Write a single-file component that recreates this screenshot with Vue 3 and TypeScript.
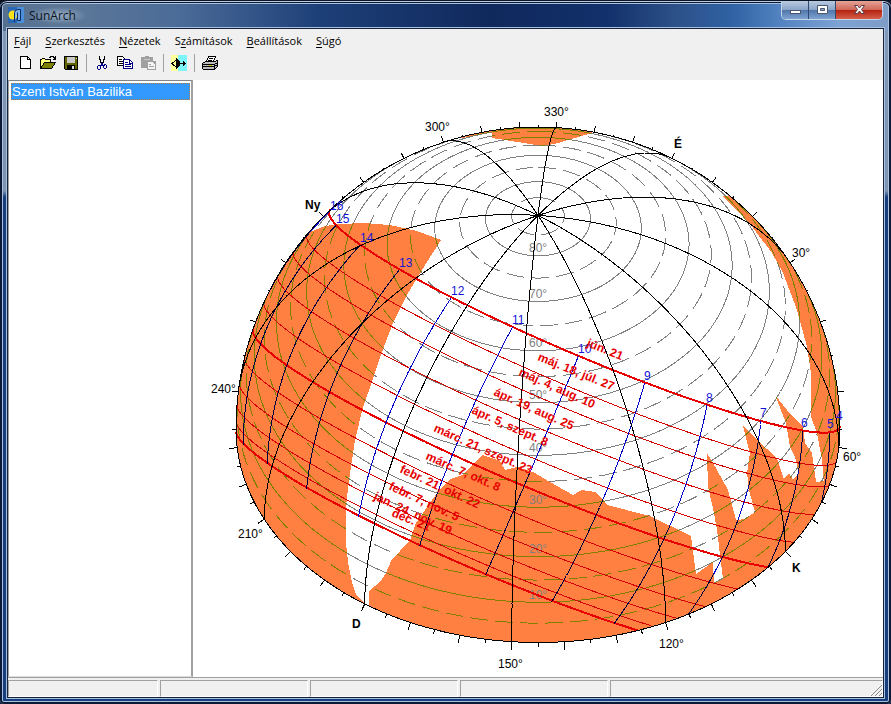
<script setup lang="ts">
type Pt = [number, number]
interface Label { text: string; x: number; y: number; bold?: boolean }
interface DateLabel { text: string; x: number; y: number; angle: number }

const menus = [
  { key: 'F', before: '', after: 'ájl' },
  { key: 'S', before: '', after: 'zerkesztés' },
  { key: 'N', before: '', after: 'ézetek' },
  { key: 'z', before: 'S', after: 'ámítások' },
  { key: 'B', before: '', after: 'eállítások' },
  { key: 'S', before: '', after: 'úgó' },
]

// Orthographic view of the sky dome, camera at azimuth 145°, 45° above the horizon.
const cx = 538
const cy = 429
const R = 302
const rad = Math.PI / 180
const cameraAz = 145 * rad
const latitude = 47.5 * rad
const tilt = Math.SQRT1_2

function project(n: number, e: number, u: number): Pt | null {
  const front = n * Math.cos(cameraAz) + e * Math.sin(cameraAz)
  const right = n * Math.sin(cameraAz) - e * Math.cos(cameraAz)
  if (u < -0.001 || front + u < -0.001) return null
  return [cx + R * right, cy + R * tilt * (front - u)]
}

function horizontal(az: number, alt: number): Pt | null {
  const c = Math.cos(alt * rad)
  return project(c * Math.cos(az * rad), c * Math.sin(az * rad), Math.sin(alt * rad))
}

function sun(hour: number, dec: number): Pt | null {
  const h = (hour - 11.73) * 15 * rad
  const d = dec * rad
  const u = Math.sin(latitude) * Math.sin(d) + Math.cos(latitude) * Math.cos(d) * Math.cos(h)
  const n = Math.cos(latitude) * Math.sin(d) - Math.sin(latitude) * Math.cos(d) * Math.cos(h)
  return project(n, -Math.cos(d) * Math.sin(h), u)
}

function trace(from: number, to: number, step: number, f: (t: number) => Pt | null): string {
  let path = ''
  let open = false
  const count = Math.round((to - from) / step)
  for (let i = 0; i <= count; i++) {
    const p = f(from + i * step)
    if (p) path += `${open ? 'L' : 'M'}${p[0].toFixed(1)} ${p[1].toFixed(1)}`
    open = p !== null
  }
  return path
}

const altitudes = Array.from({ length: 17 }, (_, i) => (i + 1) * 5).map((alt) => ({
  dashed: alt % 10 === 5,
  d: trace(-35, 325, 1, (az) => horizontal(az, alt)),
}))

const meridians = Array.from({ length: 12 }, (_, i) => trace(0, 90, 0.5, (alt) => horizontal(i * 30, alt)))

const sunPaths = [
  { dec: 23.44, thick: true },
  { dec: 17.2, thick: false },
  { dec: 13.1, thick: false },
  { dec: 7.7, thick: false },
  { dec: 2, thick: false },
  { dec: -3.6, thick: true },
  { dec: -9.1, thick: false },
  { dec: -14.2, thick: false },
  { dec: -18.2, thick: false },
  { dec: -21.3, thick: false },
  { dec: -23.2, thick: true },
].map(({ dec, thick }) => ({ thick, d: trace(2, 22, 0.05, (h) => sun(h, dec)) }))

const hourLines = Array.from({ length: 17 }, (_, i) => trace(-23.44, 23.44, 0.2, (dec) => sun(i + 4, dec)))

const ticks = Array.from({ length: 72 }, (_, i) => {
  const theta = cameraAz - i * 5 * rad
  const c = Math.cos(theta)
  const behind = c < 0
  const alt = behind ? Math.atan(-c) : 0
  const x = R * Math.cos(alt) * Math.sin(theta)
  const y = R * tilt * (Math.cos(alt) * c - Math.sin(alt))
  const nx = x
  const ny = behind ? y : y * 2
  const length = (i % 2 ? 4 : 8) - (behind ? 2 : 0)
  const size = length / Math.hypot(nx, ny)
  return `M${(cx + x).toFixed(1)} ${(cy + y).toFixed(1)}l${(nx * size).toFixed(1)} ${(ny * size).toFixed(1)}`
}).join('')

const outline = `M${cx - R} ${cy}A${R} ${R} 0 0 1 ${cx + R} ${cy}A${R} ${R * tilt} 0 0 1 ${cx - R} ${cy}Z`

// Surrounding buildings and terrain that cover the sky.
const obstacles = [
  'M310 232L325 226L340 224L363 223L390 225L417 231L441 240L427 262L408 293L393 323L382 352L372 382L363 407L355 440L349 480L346 507L346 543L348 562L352 582L356 595L365 603L340 620L200 560L200 300Z',
  'M369 606V591L380 582L386 573L391 561L410 540L416 523L437 493L450 479L462 475L477 460L483 455L500 461L505 470L517 467L533 472L550 482L573 495L582 490L595 492L602 498L607 505L650 516L691 536L696 574L713 562L714 583L723 579L717 530L713 508L708 487L707 453L717 470L728 490L736 520L745 519L755 512L749 490L747 473L750 453L747 442L743 426L757 440L777 458L784 479L789 473L793 480L799 473L795 457L790 447L786 423L775 395L787 410L803 427L805 443L812 453L816 482L824 481L822 460L817 433L811 417V373L807 347L797 310L783 273L772 253L753 228L737 210L722 196L735 196L900 250V660H369Z',
  'M462 138L492 132V138L543 146L558 143L592 133L592 120H462Z',
].join('')

const rimLabels: Label[] = [
  { text: '300°', x: 425, y: 131 },
  { text: '330°', x: 544, y: 116 },
  { text: 'É', x: 674, y: 148, bold: true },
  { text: '30°', x: 792, y: 257 },
  { text: '60°', x: 843, y: 461 },
  { text: 'K', x: 792, y: 572, bold: true },
  { text: '120°', x: 659, y: 648 },
  { text: '150°', x: 498, y: 668 },
  { text: 'D', x: 352, y: 628, bold: true },
  { text: '210°', x: 238, y: 538 },
  { text: '240°', x: 211, y: 393 },
  { text: 'Ny', x: 305, y: 209, bold: true },
]

const altLabels: Label[] = [
  { text: '80°', x: 529, y: 252 },
  { text: '70°', x: 529, y: 298 },
  { text: '60°', x: 529, y: 347 },
  { text: '50°', x: 529, y: 399 },
  { text: '40°', x: 529, y: 452 },
  { text: '30°', x: 529, y: 504 },
  { text: '20°', x: 529, y: 553 },
  { text: '10°', x: 529, y: 599 },
]

const hourLabels: Label[] = [
  { text: '16', x: 330, y: 210 },
  { text: '15', x: 336, y: 223 },
  { text: '14', x: 360, y: 242 },
  { text: '13', x: 399, y: 267 },
  { text: '12', x: 451, y: 295 },
  { text: '11', x: 512, y: 324 },
  { text: '10', x: 578, y: 353 },
  { text: '9', x: 644, y: 380 },
  { text: '8', x: 706, y: 402 },
  { text: '7', x: 760, y: 417 },
  { text: '6', x: 801, y: 427 },
  { text: '5', x: 827, y: 428 },
  { text: '4', x: 836, y: 420 },
]

const dateLabels: DateLabel[] = [
  { text: 'jún. 21', x: 586, y: 346, angle: 22 },
  { text: 'máj. 18, júl. 27', x: 537, y: 360, angle: 22 },
  { text: 'máj. 4, aug. 10', x: 518, y: 375, angle: 24 },
  { text: 'ápr. 19, aug. 25', x: 493, y: 395, angle: 24 },
  { text: 'ápr. 5, szept. 8', x: 471, y: 413, angle: 24 },
  { text: 'márc. 21, szept. 23', x: 433, y: 431, angle: 24 },
  { text: 'márc. 7, okt. 8', x: 425, y: 459, angle: 24 },
  { text: 'febr. 21, okt. 22', x: 399, y: 472, angle: 25 },
  { text: 'febr. 7, nov. 5', x: 388, y: 489, angle: 25 },
  { text: 'jan. 24, nov. 19', x: 373, y: 499, angle: 25 },
  { text: 'déc. 21', x: 391, y: 516, angle: 22 },
]
</script>

<template>
  <div class="window">
    <header class="titlebar">
      <svg class="app-icon" width="16" height="16" viewBox="0 0 16 16">
        <rect width="16" height="16" fill="#2a67b5" />
        <rect x="9" width="7" height="16" fill="#4a8fd8" />
        <circle cx="5" cy="8" r="4.500" fill="#ffe11a" />
        <path d="M6.500 15V5.500Q7 2.500 10 2.500h2.500v11h-3V5.500" fill="#7db4ea" stroke="#0b2a66" />
      </svg>
      <span class="title">SunArch</span>
      <div class="caption">
        <button class="cap" aria-label="Minimize">
          <svg width="13" height="12" viewBox="0 0 13 12"><rect x="1.500" y="6.500" width="10" height="3" fill="#fff" stroke="#4a566c" /></svg>
        </button>
        <button class="cap" aria-label="Maximize">
          <svg width="13" height="12" viewBox="0 0 13 12"><path d="M1.500 1.500h10v8h-10zM4.500 4.500v2h4v-2z" fill="#fff" fill-rule="evenodd" stroke="#4a566c" /></svg>
        </button>
        <button class="cap close" aria-label="Close">
          <svg width="13" height="12" viewBox="0 0 13 12"><path d="M1.500 1.500h3L6.500 4l2-2.500h3L8.500 5.500l3 4h-3L6.500 7l-2 2.500h-3l3-4z" fill="#fff" stroke="#5a3a44" /></svg>
        </button>
      </div>
    </header>

    <div class="client">
      <nav class="menubar">
        <button v-for="m in menus" :key="m.before + m.key + m.after">{{ m.before }}<u>{{ m.key }}</u>{{ m.after }}</button>
      </nav>

      <div class="toolbar">
        <button aria-label="New">
          <svg width="16" height="16" viewBox="0 0 16 16" shape-rendering="crispEdges"><path d="M3.500 1.500h7l3 3v9h-10z" fill="#fff" stroke="#000" /><path d="M10.500 1.500v3h3" fill="none" stroke="#000" /></svg>
        </button>
        <button aria-label="Open">
          <svg width="16" height="16" viewBox="0 0 16 16" shape-rendering="crispEdges"><path d="M.5 13.500v-9h1l1-1h2l1 1h5v3H5z" fill="#ffff80" stroke="#000" /><path d="M.5 13.500l4-6h11l-4 6z" fill="#808000" stroke="#000" /><path d="M9 2.500h1v-1h3v1h1v1h1M15.500 1v4M13 4.500h3" fill="none" stroke="#000" /></svg>
        </button>
        <button aria-label="Save">
          <svg width="16" height="16" viewBox="0 0 16 16" shape-rendering="crispEdges"><path d="M1.500 1.500h13v13h-12l-1-1z" fill="#666600" stroke="#000" /><path d="M4 2h8v6H4z" fill="#c8c8c8" /><path d="M4 10h8v4H4z" fill="#000" /><path d="M9 11h2v3H9z" fill="#ddd" /><path d="M13 3h1v1h-1z" fill="#ddd" /></svg>
        </button>
        <i class="sep"></i>
        <button aria-label="Cut">
          <svg width="16" height="16" viewBox="0 0 16 16" shape-rendering="crispEdges"><path d="M5.500 1v3l1 1v2l1 1v1M10.500 1v3l-1 1v2l-1 1v1" fill="none" stroke="#000" /><path d="M7.500 8v2l-1 1M8.500 8v2h2M4.500 10.500h1l1 1v2l-1 1h-1l-1-1v-2zM10.500 9.500h1l1 1v2l-1 1h-1l-1-1v-2z" fill="none" stroke="#000080" /></svg>
        </button>
        <button aria-label="Copy">
          <svg width="16" height="16" viewBox="0 0 16 16" shape-rendering="crispEdges"><path d="M.5 1.500h5l3 3v6h-8z" fill="#fff" stroke="#000" /><path d="M2 4.500h3M2 6.500h4M2 8.500h4" stroke="#000" /><path d="M6.500 4.500h6l3 3v6h-9z" fill="#fff" stroke="#000080" /><path d="M8 7.500h3M8 9.500h6M8 11.500h6M12.500 5v3h3" fill="none" stroke="#000080" /></svg>
        </button>
        <button aria-label="Paste" disabled>
          <svg width="16" height="16" viewBox="0 0 16 16" shape-rendering="crispEdges"><path d="M1 2h4V1h4v1h4v4h3v9H7v-2H1z" fill="#a0a0a0" /><path d="M8 7h4l3 3v4H8z" fill="#f4f4f4" /><path d="M9 9.500h2M9 11.500h5" stroke="#a0a0a0" /><path d="M4 4.500h6" stroke="#c8c8c8" /></svg>
        </button>
        <i class="sep"></i>
        <button aria-label="View direction">
          <svg width="16" height="16" viewBox="0 0 16 16" shape-rendering="crispEdges"><path d="M0 0h7v16H0z" fill="#ffff99" /><path d="M7 0h9v16H7z" fill="#7df5fb" /><path d="M5.500 3v2L1 8.500l4.500 4V14" fill="none" stroke="#000" /><path d="M5 4h1l3 3v3l-3 3H5z" fill="#000" /><path d="M9 8.500h6M12.500 6v5M13.500 7v3" stroke="#000" /></svg>
        </button>
        <i class="sep"></i>
        <button aria-label="Print">
          <svg width="16" height="16" viewBox="0 0 16 16" shape-rendering="crispEdges"><path d="M4.500 6.500l2-5h7l-2 5" fill="#fff" stroke="#000" /><path d="M7 3.500h4M6 5.500h4" stroke="#000" /><path d="M.5 8.500l3-2h9l3-1v6l-3 3h-11l-1-1z" fill="#bcbcbc" stroke="#000" /><path d="M1 9.500h11M1 11.500h11M12.500 9v5M13 8.500h2M13 10.500h2" stroke="#000" /><path d="M7 10.500h3" stroke="#cccc00" /></svg>
        </button>
      </div>

      <main class="body">
        <aside class="tree">
          <button class="node">Szent István Bazilika</button>
        </aside>
        <svg class="dome" viewBox="193 80 690 597">
          <defs>
            <clipPath id="sky"><path :d="outline" /></clipPath>
            <clipPath id="covered"><path :d="obstacles" /></clipPath>
          </defs>
          <g clip-path="url(#sky)" shape-rendering="crispEdges"><path :d="obstacles" class="obstacle" /></g>
          <g class="altitude">
            <path v-for="(a, i) in altitudes" :key="i" :d="a.d" :class="{ dashed: a.dashed }" />
          </g>
          <g class="altitude olive" clip-path="url(#covered)">
            <path v-for="(a, i) in altitudes" :key="i" :d="a.d" :class="{ dashed: a.dashed }" />
          </g>
          <g class="grey-text">
            <text v-for="l in altLabels" :key="l.text" :x="l.x" :y="l.y">{{ l.text }}</text>
          </g>
          <g class="sun-path">
            <path v-for="(s, i) in sunPaths" :key="i" :d="s.d" :class="{ thick: s.thick }" />
          </g>
          <g class="hour"><path v-for="(h, i) in hourLines" :key="i" :d="h" /></g>
          <g class="hour dark" clip-path="url(#covered)"><path v-for="(h, i) in hourLines" :key="i" :d="h" /></g>
          <g class="meridian">
            <path v-for="(m, i) in meridians" :key="i" :d="m" />
            <path :d="outline" />
            <path :d="ticks" />
          </g>
          <text v-for="l in rimLabels" :key="l.text" :x="l.x" :y="l.y" :class="{ bold: l.bold }">{{ l.text }}</text>
          <g class="hour-text">
            <text v-for="l in hourLabels" :key="l.text" :x="l.x" :y="l.y">{{ l.text }}</text>
          </g>
          <g class="date-text">
            <text v-for="l in dateLabels" :key="l.text" :transform="`translate(${l.x} ${l.y}) rotate(${l.angle})`">{{ l.text }}</text>
          </g>
        </svg>
      </main>

      <footer class="status">
        <span class="first"></span><span></span><span></span><span></span>
        <span class="last">
          <svg width="12" height="12" viewBox="0 0 12 12"><path d="M1 12L12 1M5 12l7-7M9 12l3-3" stroke="#8c8c8c" /></svg>
        </span>
      </footer>
    </div>
  </div>
</template>

<style>
body { margin: 0; background: #0a1226; }
</style>

<style scoped>
* { box-sizing: border-box; }
.window {
  height: 100vh;
  display: flex;
  flex-direction: column;
  padding: 0 8px 7px;
  border: 1px solid #0c1526;
  border-width: 1px 0 0;
  border-radius: 7px 7px 4px 4px;
  background: linear-gradient(90deg, #55708f 0, #5c7798 8%, #4b6c98 20%, #1d3f78 36%, #10295c 55%, #12306b 68%, #2d5189 76%, #2f61a3 82%, #5585c2 88%, #7da2d4 94%, #7e9cc6 100%) top / 100% 30px no-repeat,
    linear-gradient(180deg, #8298b4 0, #7d94b2 190px, #173d7c 196px, #173d7c 100%);
  box-shadow: inset 0 1px 0 #b9c9df, inset 0 0 0 2px #0d1a36, inset 0 0 0 3px #a9c2e0;
}
button { border: 0; padding: 0; margin: 0; background: none; font: inherit; color: inherit; }
.titlebar { height: 28px; display: flex; align-items: center; gap: 5px; flex: none; }
.title {
  font: 12px "Open Sans", sans-serif;
  color: #0c1522;
  padding: 0 12px 0 0;
  background: radial-gradient(closest-side, rgb(190 208 225 / 60%), transparent);
}
.caption {
  margin-left: auto;
  align-self: flex-start;
  display: flex;
  height: 19px;
  border: 1px solid #c4d5ea;
  border-top: 0;
  border-radius: 0 0 5px 5px;
  overflow: hidden;
}
.cap {
  width: 27px;
  display: flex;
  align-items: center;
  justify-content: center;
  border-right: 1px solid #30496e;
  background: linear-gradient(#b9cae0, #8ba5c8 48%, #4f75a8 50%, #7ea3d2);
}
.close { width: 46px; border: 0; background: linear-gradient(#e5a496, #d0685a 48%, #b3200f 50%, #d5604a); }
.client {
  flex: 1;
  min-height: 0;
  display: flex;
  flex-direction: column;
  background: #f0f0f0;
  box-shadow: 0 0 0 1px #16233d, 0 0 0 2px #a7c0df;
}
.menubar { height: 23px; display: flex; align-items: center; gap: 14px; padding-left: 6px; font: 11px "Open Sans", sans-serif; color: #000; }
.menubar u { text-underline-offset: 2px; }
.toolbar { height: 28px; display: flex; align-items: center; padding: 0 0 6px 5px; }
.toolbar button { width: 23px; height: 22px; display: flex; align-items: center; justify-content: center; }
.sep { width: 8px; height: 18px; display: flex; justify-content: center; }
.sep::before { content: ""; width: 1px; background: #a0a0a0; }
.body { flex: 1; min-height: 0; display: flex; background: #fff; }
.tree { width: 185px; flex: none; padding: 2px 1px 2px 2px; border: 1px solid #a0a0a0; border-color: #848484 #a0a0a0 #dcdcdc #a0a0a0; border-right-width: 2px; }
.node {
  display: block;
  width: 100%;
  height: 17px;
  text-align: left;
  color: #fff;
  background: #3399ff;
  border: 1px dotted #b97a3a;
  font: 13px/15px "Liberation Sans", Arial, sans-serif;
}
.dome { flex: 1; min-width: 0; height: 100%; display: block; font: 12px "Liberation Sans", Arial, sans-serif; }
.dome path { fill: none; }
.dome .obstacle { fill: #ff8040; }
.altitude path { stroke: #808080; shape-rendering: crispEdges; }
.altitude.olive path { stroke: #808000; }
.altitude .dashed { stroke-dasharray: 18 7; }
.sun-path path { stroke: #d40000; shape-rendering: crispEdges; }
.sun-path .thick { stroke: #e80000; stroke-width: 2; }
.hour path { stroke: #0000c8; shape-rendering: crispEdges; }
.hour.dark path { stroke: #000040; }
.meridian path { stroke: #000; shape-rendering: crispEdges; }
.bold { font-weight: bold; }
.grey-text { fill: #808080; }
.hour-text { fill: #1414d8; }
.date-text { fill: #e60000; font-weight: bold; }
.status { height: 20px; display: flex; gap: 2px; padding-top: 2px; border-top: 1px solid #a0a0a0; }
.status span { width: 148px; border: 1px solid #a0a0a0; border-color: #a0a0a0 #fff #fff #a0a0a0; }
.status .first { width: 150px; }
.status .last { flex: 1; display: flex; justify-content: flex-end; align-items: flex-end; }
</style>
